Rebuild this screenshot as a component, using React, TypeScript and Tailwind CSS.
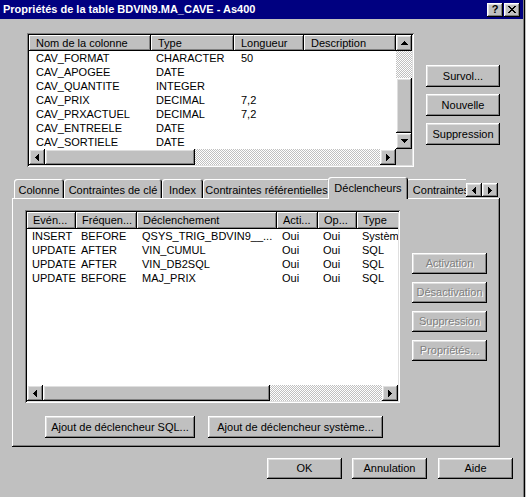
import React from 'react';

// Win95-style bevels
const RAISED = 'shadow-[inset_-1px_-1px_0_#000,inset_1px_1px_0_#fff,inset_-2px_-2px_0_#808080,inset_2px_2px_0_#dfdfdf]';
const SUNKEN = 'shadow-[inset_1px_1px_0_#808080,inset_-1px_-1px_0_#fff,inset_2px_2px_0_#000,inset_-2px_-2px_0_#dfdfdf]';
const HEADER = 'shadow-[inset_-1px_-1px_0_#000,inset_1px_1px_0_#fff,inset_-2px_-2px_0_#808080]';
const DITHER = 'bg-[image:repeating-conic-gradient(#fff_0_25%,#c0c0c0_0_50%)] bg-[length:2px_2px]';
const TAB = 'shadow-[inset_1px_1px_0_#fff,inset_-1px_0_0_#000,inset_-2px_0_0_#808080]';

type Dir = 'up' | 'down' | 'left' | 'right';

const Arrow = ({ dir }: { dir: Dir }) => {
  const rows = [[3, 1], [2, 3], [1, 5], [0, 7]];
  const vertical = dir === 'up' || dir === 'down';
  return (
    <svg width={vertical ? 7 : 4} height={vertical ? 4 : 7} shapeRendering="crispEdges">
      {rows.map(([s, l], i) => {
        const k = dir === 'down' || dir === 'right' ? 3 - i : i;
        return vertical
          ? <rect key={i} x={s} y={k} width={l} height={1} fill="#000" />
          : <rect key={i} x={k} y={s} width={1} height={l} fill="#000" />;
      })}
    </svg>
  );
};

const ScrollBtn = ({ dir, w = 16, h = 16 }: { dir: Dir; w?: number; h?: number }) => (
  <div className={`shrink-0 bg-[#c0c0c0] flex items-center justify-center ${RAISED}`} style={{ width: w, height: h }}>
    <Arrow dir={dir} />
  </div>
);

const Btn = ({ w, h, children, disabled }: { w: number; h: number; children: React.ReactNode; disabled?: boolean }) => (
  <div
    className={`shrink-0 flex items-center justify-center bg-[#c0c0c0] text-[11px] whitespace-nowrap ${RAISED} ${disabled ? 'text-[#808080] [text-shadow:1px_1px_0_#fff]' : 'text-black'}`}
    style={{ width: w, height: h }}
  >
    {children}
  </div>
);

const CloseGlyph = () => (
  <svg width={8} height={7} shapeRendering="crispEdges">
    {[0, 1, 2, 3, 4, 5, 6].map(i => (
      <g key={i} fill="#000">
        <rect x={i} y={i} width={2} height={1} />
        <rect x={6 - i} y={i} width={2} height={1} />
      </g>
    ))}
  </svg>
);

const columns = [
  { name: 'CAV_FORMAT', type: 'CHARACTER', len: '50' },
  { name: 'CAV_APOGEE', type: 'DATE', len: '' },
  { name: 'CAV_QUANTITE', type: 'INTEGER', len: '' },
  { name: 'CAV_PRIX', type: 'DECIMAL', len: '7,2' },
  { name: 'CAV_PRXACTUEL', type: 'DECIMAL', len: '7,2' },
  { name: 'CAV_ENTREELE', type: 'DATE', len: '' },
  { name: 'CAV_SORTIELE', type: 'DATE', len: '' },
];

const triggers = [
  ['INSERT', 'BEFORE', 'QSYS_TRIG_BDVIN9__...', 'Oui', 'Oui', 'Système'],
  ['UPDATE', 'AFTER', 'VIN_CUMUL', 'Oui', 'Oui', 'SQL'],
  ['UPDATE', 'AFTER', 'VIN_DB2SQL', 'Oui', 'Oui', 'SQL'],
  ['UPDATE', 'BEFORE', 'MAJ_PRIX', 'Oui', 'Oui', 'SQL'],
];

const colWidths = [122, 83, 70, 92];
const colHeads = ['Nom de la colonne', 'Type', 'Longueur', 'Description'];
const trigWidths = [49, 61, 140, 41, 39, 60];
const trigHeads = ['Evén...', 'Fréquen...', 'Déclenchement', 'Acti...', 'Op...', 'Type'];

const tabs = [
  { label: 'Colonne', w: 50 },
  { label: 'Contraintes de clé', w: 98 },
  { label: 'Index', w: 41 },
  { label: 'Contraintes référentielles', w: 127 },
  { label: 'Déclencheurs', w: 76, active: true },
  { label: 'Contraintes', w: 70 },
];

export default function App() {
  return (
    <div className="w-[526px] h-[497px] bg-[#c0c0c0] flex font-['Liberation_Sans',Arial,sans-serif] text-[11px] text-black overflow-hidden">
      <div className="w-[523px] flex flex-col">
        {/* Title bar */}
        <div className="h-[19px] bg-[#000080] flex items-center justify-between pl-[3px] pr-[3px]">
          <span className="text-white font-bold text-[11px] whitespace-nowrap">Propriétés de la table BDVIN9.MA_CAVE - As400</span>
          <div className="flex gap-[1px]">
            <div className={`w-[16px] h-[14px] bg-[#c0c0c0] flex items-center justify-center font-bold text-[11px] leading-none ${RAISED}`}>?</div>
            <div className={`w-[16px] h-[14px] bg-[#c0c0c0] flex items-center justify-center ${RAISED}`}>
              <CloseGlyph />
            </div>
          </div>
        </div>

        {/* Columns list + buttons */}
        <div className="flex ml-[27px] mt-[14px]">
          <div className={`w-[387px] h-[134px] p-[2px] bg-white flex flex-col ${SUNKEN}`}>
            <div className="flex h-[114px]">
              <div className="w-[367px] overflow-hidden">
                <div className="flex h-[16px] bg-[#c0c0c0]">
                  {colHeads.map((h, i) => (
                    <div key={h} className={`shrink-0 flex items-center pl-[7px] whitespace-nowrap ${HEADER}`} style={{ width: colWidths[i] }}>
                      {h}
                    </div>
                  ))}
                </div>
                {columns.map(c => (
                  <div key={c.name} className="flex h-[14px] items-center">
                    <div className="shrink-0 pl-[7px]" style={{ width: colWidths[0] }}>{c.name}</div>
                    <div className="shrink-0 pl-[5px]" style={{ width: colWidths[1] }}>{c.type}</div>
                    <div className="shrink-0 pl-[7px]" style={{ width: colWidths[2] }}>{c.len}</div>
                  </div>
                ))}
              </div>
              <div className="w-[16px] flex flex-col">
                <ScrollBtn dir="up" />
                <div className={`h-[27px] ${DITHER}`} />
                <div className={`h-[55px] bg-[#c0c0c0] ${RAISED}`} />
                <ScrollBtn dir="down" />
              </div>
            </div>
            <div className="flex h-[16px]">
              <ScrollBtn dir="left" />
              <div className={`w-[150px] bg-[#c0c0c0] ${RAISED}`} />
              <div className={`w-[185px] ${DITHER}`} />
              <ScrollBtn dir="right" />
              <div className="w-[16px] bg-[#c0c0c0]" />
            </div>
          </div>
          <div className="ml-[12px] mt-[32px] flex flex-col gap-[7px]">
            <Btn w={74} h={22}>Survol...</Btn>
            <Btn w={74} h={22}>Nouvelle</Btn>
            <Btn w={74} h={22}>Suppression</Btn>
          </div>
        </div>

        {/* Tabs */}
        <div className="ml-[14px] mt-[10px] h-[22px] mb-[-1px] flex relative z-10">
          <div className="w-[452px] h-[22px] overflow-hidden flex items-start">
            {tabs.map(t => (
              <div
                key={t.label}
                className={`shrink-0 flex justify-center whitespace-nowrap bg-[#c0c0c0] rounded-t-[3px] ${TAB} ${t.active ? 'h-[22px] w-[80px] -mx-[2px] relative z-10 pt-[3px]' : 'h-[19px] mt-[2px] pt-[3px]'}`}
                style={t.active ? undefined : { width: t.w }}
              >
                {t.label}
              </div>
            ))}
          </div>
          <div className="flex mt-[6px]">
            <ScrollBtn dir="left" w={16} h={14} />
            <ScrollBtn dir="right" w={16} h={14} />
          </div>
        </div>

        {/* Tab panel */}
        <div className={`ml-[12px] w-[488px] h-[249px] pt-[12px] pl-[13px] flex flex-col ${HEADER}`}>
          <div className="flex">
            <div className={`w-[375px] h-[193px] p-[2px] bg-white flex flex-col ${SUNKEN}`}>
              <div className="flex-1 overflow-hidden">
                <div className="flex h-[17px] bg-[#c0c0c0]">
                  {trigHeads.map((h, i) => (
                    <div key={h} className={`shrink-0 flex items-center pl-[6px] whitespace-nowrap overflow-hidden ${HEADER}`} style={{ width: trigWidths[i] }}>
                      {h}
                    </div>
                  ))}
                </div>
                {triggers.map((r, ri) => (
                  <div key={ri} className="flex h-[14px] items-center mt-[0px]">
                    {r.map((v, i) => (
                      <div key={i} className="shrink-0 pl-[5px] whitespace-nowrap overflow-hidden" style={{ width: trigWidths[i] }}>
                        {v}
                      </div>
                    ))}
                  </div>
                ))}
              </div>
              <div className="flex h-[16px]">
                <ScrollBtn dir="left" />
                <div className={`w-[227px] bg-[#c0c0c0] ${RAISED}`} />
                <div className={`w-[112px] ${DITHER}`} />
                <ScrollBtn dir="right" />
              </div>
            </div>
            <div className="ml-[12px] mt-[43px] flex flex-col gap-[8px]">
              <Btn w={75} h={21} disabled>Activation</Btn>
              <Btn w={75} h={21} disabled>Désactivation</Btn>
              <Btn w={75} h={21} disabled>Suppression</Btn>
              <Btn w={75} h={21} disabled>Propriétés...</Btn>
            </div>
          </div>
          <div className="flex ml-[20px] mt-[13px] gap-[13px]">
            <Btn w={150} h={22}>Ajout de déclencheur SQL...</Btn>
            <Btn w={175} h={22}>Ajout de déclencheur système...</Btn>
          </div>
        </div>

        {/* Dialog buttons */}
        <div className="flex ml-[267px] mt-[11px]">
          <Btn w={75} h={21}>OK</Btn>
          <div className="w-[10px]" />
          <Btn w={75} h={21}>Annulation</Btn>
          <div className="w-[11px]" />
          <Btn w={75} h={21}>Aide</Btn>
        </div>
      </div>
      <div className="w-[1px] bg-[#808080]" />
      <div className="w-[1px] bg-black" />
    </div>
  );
}
